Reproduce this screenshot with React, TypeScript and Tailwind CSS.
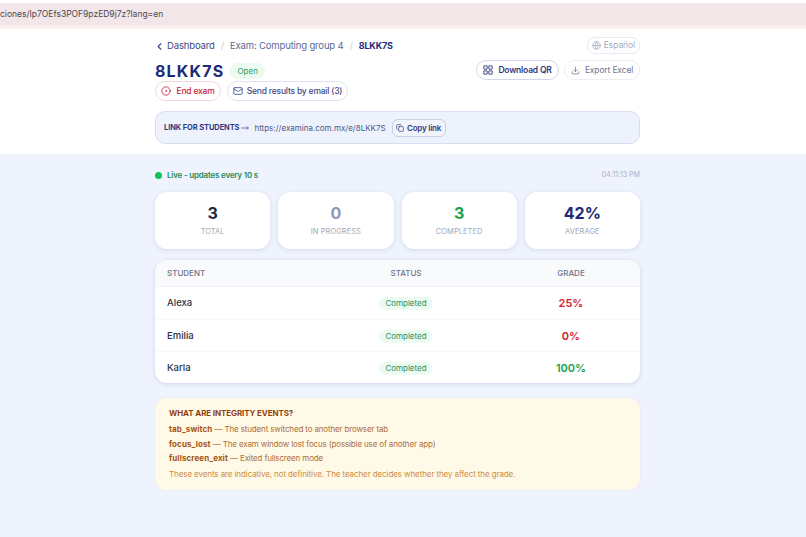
import { ChevronLeft, CircleDot, Copy, Download, Globe, Mail, MoveRight } from "lucide-react"

const stats = [
  { value: "3", label: "TOTAL", color: "text-[#1f2542]" },
  { value: "0", label: "IN PROGRESS", color: "text-[#8d97b3]" },
  { value: "3", label: "COMPLETED", color: "text-[#16a34a]" },
  { value: "42%", label: "AVERAGE", color: "text-[#1e2a78]" },
]

const students = [
  { name: "Alexa", grade: "25%", color: "text-[#d3202f]" },
  { name: "Emilia", grade: "0%", color: "text-[#d3202f]" },
  { name: "Karla", grade: "100%", color: "text-[#16a34a]" },
]

const events = [
  { code: "tab_switch", text: "The student switched to another browser tab" },
  { code: "focus_lost", text: "The exam window lost focus (possible use of another app)" },
  { code: "fullscreen_exit", text: "Exited fullscreen mode" },
]

function QrIcon() {
  return (
    <svg viewBox="0 0 12 12" className="h-[10px] w-[10px]" fill="none" stroke="currentColor" strokeWidth="1.1">
      <rect x="1" y="1" width="4" height="4" rx="0.3" />
      <rect x="7" y="1" width="4" height="4" rx="0.3" />
      <rect x="1" y="7" width="4" height="4" rx="0.3" />
      <rect x="7" y="7" width="4" height="4" rx="0.3" />
    </svg>
  )
}

export default function App() {
  return (
    <div className="h-[537px] w-[806px] overflow-hidden bg-[#eff3fe] font-['Inter',sans-serif]">
      <div className="bg-white pt-[3px]">
        <div className="h-[22px] overflow-hidden whitespace-nowrap bg-[#f3e6e9] text-[8.5px] leading-[22px] text-[#4a4a50]">
          ciones/Ip7OEfs3POF9pzED9j7z?lang=en
        </div>
        <div className="h-1 bg-[#faf1ef]" />
      </div>

      <div className="h-[125px] bg-white">
        <div className="ml-[155px] w-[485px]">
          <div className="flex h-[25px] items-center justify-between pt-[8px]">
            <div className="flex items-center pt-[1px] text-[9.5px] tracking-[-0.15px] text-[#3d4a86]">
              <ChevronLeft className="mr-[2px] ml-[-1px] h-[11px] w-[11px]" strokeWidth={2.5} />
              <span>Dashboard</span>
              <span className="mx-[6px] text-[#c5cbdc]">/</span>
              <span className="text-[#5b6894]">Exam: Computing group 4</span>
              <span className="mx-[6px] text-[#c5cbdc]">/</span>
              <span className="text-[9px] font-bold tracking-[-0.2px] text-[#1e2a78]">8LKK7S</span>
            </div>
            <div className="flex h-[17px] items-center gap-[3px] rounded-[8px] border border-[#e8ebf3] px-[4px] text-[8.5px] tracking-[-0.1px] text-[#a4abbd]">
              <Globe className="h-[9px] w-[9px]" />
              <span>Español</span>
            </div>
          </div>

          <div className="mt-[5px] flex items-start justify-between">
            <div>
              <div className="flex h-[24px] items-center">
                <span className="text-[16px] font-bold tracking-[1.2px] text-[#1e2a78]">8LKK7S</span>
                <span className="ml-[6px] rounded-full bg-[#ebfbf1] px-[7px] py-[2px] text-[8px] text-[#2f9e63]">Open</span>
              </div>
              <div className="mt-[-2px] flex gap-[6px]">
                <button className="flex h-[20px] w-[66px] items-center justify-center gap-[5px] rounded-full border border-[#f6d6d9] bg-white text-[8.5px] font-medium tracking-[-0.2px] text-[#c62536]">
                  <CircleDot className="h-[10px] w-[10px]" />
                  End exam
                </button>
                <button className="flex h-[20px] w-[121px] items-center justify-center gap-[4px] rounded-full border border-[#dfe2f0] bg-white text-[8.5px] font-medium tracking-[-0.2px] text-[#3d4a86]">
                  <Mail className="h-[10px] w-[10px]" />
                  Send results by email (3)
                </button>
              </div>
            </div>
            <div className="mt-[1px] flex gap-[5px]">
              <button className="flex h-[20px] w-[83px] items-center justify-center gap-[5px] rounded-full border border-[#d3d7ea] bg-white text-[8.5px] font-semibold tracking-[-0.2px] text-[#2f3a80]">
                <QrIcon />
                Download QR
              </button>
              <button className="flex h-[20px] w-[76px] items-center justify-center gap-[5px] rounded-full border border-[#eceef4] bg-white text-[8.5px] tracking-[-0.15px] text-[#70778f]">
                <Download className="h-[9px] w-[9px]" />
                Export Excel
              </button>
            </div>
          </div>

          <div className="mt-[10px] flex h-[33px] items-center rounded-[10px] border border-[#d8deef] bg-[#eef2fd] pl-[8px]">
            <span className="text-[7.5px] font-bold tracking-[-0.1px] text-[#2f3a80]">LINK FOR STUDENTS</span>
            <MoveRight className="mx-[1px] h-[8px] w-[10px] text-[#2f3a80]" />
            <span className="ml-[3px] text-[8px] text-[#4c5a80]">https://examina.com.mx/e/8LKK7S</span>
            <button className="ml-[6px] flex h-[18px] w-[54px] items-center justify-center gap-[3px] rounded-[6px] border border-[#c9d0e6] bg-[#f1f4fd] text-[8px] font-semibold tracking-[-0.2px] text-[#2f3a80]">
              <Copy className="h-[8px] w-[8px]" />
              Copy link
            </button>
          </div>
        </div>
      </div>

      <div className="ml-[155px] w-[485px]">
        <div className="flex h-[38px] items-center justify-between pt-[4px]">
          <div className="flex items-center gap-[5px]">
            <span className="h-[7px] w-[7px] rounded-full bg-[#10c257]" />
            <span className="text-[8px] font-semibold tracking-[-0.2px] text-[#1f8a5a]">Live - updates every 10 s</span>
          </div>
          <span className="text-[7.2px] tracking-[-0.1px] text-[#a9b1c4]">04:11:13 PM</span>
        </div>

        <div className="grid grid-cols-4 gap-[8px]">
          {stats.map((s) => (
            <div key={s.label} className="flex h-[57px] flex-col items-center rounded-[12px] bg-white pt-[10px] shadow-[0_1px_4px_rgba(60,80,140,0.16)]">
              <span className={"text-[16px] leading-[22px] font-bold " + s.color}>{s.value}</span>
              <span className="mt-[2px] text-[7.5px] leading-[11px] tracking-[0.05px] text-[#a2a9bb]">{s.label}</span>
            </div>
          ))}
        </div>

        <div className="mt-[11px] overflow-hidden rounded-[12px] bg-white shadow-[0_1px_4px_rgba(60,80,140,0.18)]">
          <div className="grid h-[27px] grid-cols-[165px_172px_148px] items-center border-b border-[#f1f3f8] bg-[#f9fafc] text-[8px] font-medium text-[#6d7488]">
            <span className="pl-[12px]">STUDENT</span>
            <span className="text-center">STATUS</span>
            <span className="pl-[10px] text-center">GRADE</span>
          </div>
          {students.map((s, i) => (
            <div key={s.name} className={"grid h-[32px] grid-cols-[165px_172px_148px] items-center pt-[1px] " + (i > 0 ? "border-t border-[#f7f8fb]" : "")}>
              <span className="pl-[12px] text-[9.5px] font-medium text-[#2b3145]">{s.name}</span>
              <span className="flex justify-center">
                <span className="rounded-full bg-[#ebfbf1] px-[6px] py-[1px] text-[8px] leading-[11px] text-[#2f8f5b]">Completed</span>
              </span>
              <span className={"pl-[10px] text-center text-[11px] font-semibold " + s.color}>{s.grade}</span>
            </div>
          ))}
        </div>

        <div className="mt-[15px] h-[92px] rounded-[12px] bg-[#fffae8] pl-[14px] pt-[9px] shadow-[0_0_2px_rgba(180,160,90,0.15)]">
          <div className="text-[8px] leading-[13px] font-bold tracking-[-0.1px] text-[#92400e]">WHAT ARE INTEGRITY EVENTS?</div>
          <div className="mt-[2px]">
            {events.map((e) => (
              <div key={e.code} className="text-[8px] leading-[14.5px] tracking-[-0.15px] text-[#ad6e35]">
                <span className="font-bold tracking-[0.1px] text-[#a4540f]">{e.code}</span> — {e.text}
              </div>
            ))}
          </div>
          <div className="mt-[1px] text-[8px] leading-[14px] tracking-[-0.1px] text-[#d08a3e]">
            These events are indicative, not definitive. The teacher decides whether they affect the grade.
          </div>
        </div>
      </div>
    </div>
  )
}
